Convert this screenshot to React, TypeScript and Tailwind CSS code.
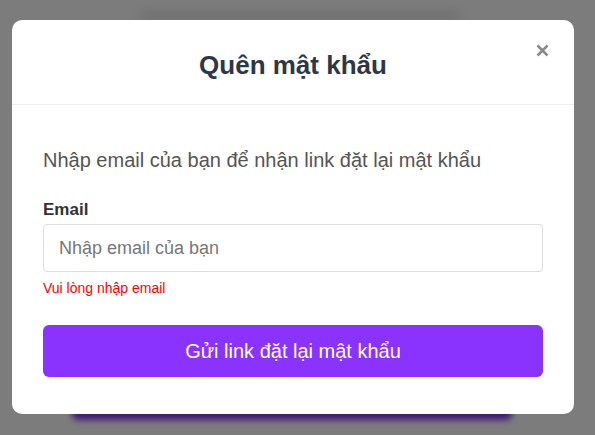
import React from "react";

export default function App() {
  return (
    <div
      className="relative flex w-[595px] h-[435px] items-start overflow-hidden bg-[#7c7c7c] px-[12px] pt-[20px]"
      style={{ fontFamily: '"Liberation Sans", Arial, sans-serif' }}
    >
      {/* blurred page behind the overlay */}
      <div className="absolute left-[140px] top-[11px] w-[320px] h-[10px] bg-[#727272] blur-[4px]" />
      <div className="absolute left-[72px] top-[396px] w-[440px] h-[24px] rounded-md bg-[#3e1a72] blur-[3px]" />

      <div className="relative flex w-[562px] flex-col bg-white rounded-[10px]">
        <div className="relative flex justify-center pt-[30px] pb-[24px] border-b border-[#eeeeee]">
          <h2 className="text-[26px] leading-[30px] font-bold text-[#2d3748]">Quên mật khẩu</h2>
          <button className="absolute right-[25px] top-[24px] w-[13px] h-[13px]">
            <svg width="13" height="13" viewBox="0 0 13 13">
              <path d="M1.5 1.5 L11.5 11.5 M11.5 1.5 L1.5 11.5" stroke="#8a8a8a" strokeWidth="2.5" />
            </svg>
          </button>
        </div>
        <div className="flex flex-col px-[31px] pt-[43px] pb-[37px]">
          <p className="text-[20px] leading-[24px] text-[#555555]">
            Nhập email của bạn để nhận link đặt lại mật khẩu
          </p>
          <label className="mt-[28px] text-[17px] leading-[20px] font-bold text-[#333333]">Email</label>
          <input
            className="mt-[4px] w-full h-[48px] px-[15px] border border-[#dddddd] rounded-[4px] text-[18px] text-[#333] placeholder:text-[#777777] outline-none"
            placeholder="Nhập email của bạn"
          />
          <div className="mt-[8px] text-[14px] leading-[16px] text-[#ff0000]">Vui lòng nhập email</div>
          <button className="mt-[29px] w-full h-[52px] rounded-[6px] bg-[#8a33ff] text-white text-[20px]">
            Gửi link đặt lại mật khẩu
          </button>
        </div>
      </div>
    </div>
  );
}
